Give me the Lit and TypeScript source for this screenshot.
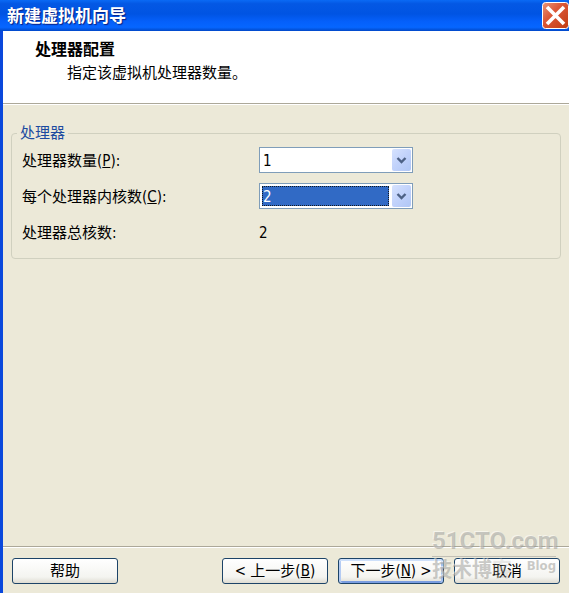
import { LitElement, html, css } from "lit";
import { customElement, property } from "lit/decorators.js";

@customElement("xp-select")
class XpSelect extends LitElement {
  @property() label = "";
  @property() key = "";
  @property() value = "1";
  @property({ type: Boolean, reflect: true }) active = false;

  static styles = css`
    :host {
      display: block;
    }
    .row {
      display: grid;
      grid-template-columns: 237px minmax(80px, 154px);
      align-items: center;
    }
    label {
      padding-top: 2px;
    }
    .box {
      position: relative;
      height: 26px;
      box-sizing: border-box;
      border: 1px solid #7f9db9;
      background: #fff;
      padding: 2px;
    }
    select {
      appearance: none;
      display: block;
      width: 100%;
      height: 20px;
      margin: 0;
      padding: 1px 24px 0 1px;
      border: 0;
      border-radius: 0;
      outline: none;
      background: none;
      color: #000;
      font: inherit;
      line-height: 20px;
    }
    .focus {
      display: none;
      position: absolute;
      inset: 2px 23px 2px 2px;
      border: 1px dotted #101820;
      pointer-events: none;
    }
    .active select {
      color: #fff;
      background: linear-gradient(#316ac5, #316ac5) no-repeat left / calc(100% - 21px) 100%;
    }
    .active .focus {
      display: block;
    }
    option {
      color: #000;
    }
    .arrow {
      position: absolute;
      top: 1px;
      right: 1px;
      bottom: 1px;
      width: 19px;
      border-radius: 2px;
      background: linear-gradient(135deg, #d6e2fe, #c1d2fb 50%, #b0c6f5);
      pointer-events: none;
    }
    svg {
      display: block;
      width: 100%;
      height: 100%;
    }
  `;

  render() {
    return html`
      <div class="row">
        <label for="field">${this.label}(<u>${this.key}</u>):</label>
        <div class="box ${this.active ? "active" : ""}">
          <select id="field" .value=${this.value}>
            ${["1", "2", "4", "8"].map(
              (n) => html`<option value=${n} ?selected=${n === this.value}>${n}</option>`
            )}
          </select>
          <span class="focus"></span>
          <span class="arrow">
            <svg viewBox="0 0 19 22" aria-hidden="true">
              <path d="M5.5 9 9.5 13 13.5 9" fill="none" stroke="#4d6185" stroke-width="2.4" />
            </svg>
          </span>
        </div>
      </div>
    `;
  }
}

@customElement("app-root")
class AppRoot extends LitElement {
  static styles = css`
    :host {
      display: flex;
      flex-direction: column;
      position: relative;
      min-height: 100vh;
      box-sizing: border-box;
      overflow: hidden;
      background: #ece9d8;
      color: #000;
      font-family: "DejaVu Sans Condensed", "Noto Sans CJK SC", sans-serif;
      font-size: 15px;
      line-height: 20px;
    }
    .title {
      display: flex;
      align-items: center;
      justify-content: space-between;
      height: 31px;
      padding-left: 7px;
      box-sizing: border-box;
      background: linear-gradient(#0a6af5, #0458e4 12%, #0054e3 45%, #0560fb 70%, #0666ff 88%, #0148c8);
    }
    .title h1 {
      margin: 0;
      color: #fff;
      font-size: 17px;
      line-height: 24px;
      text-shadow: 1px 1px 1px #0a1f80;
    }
    .close {
      display: block;
      width: 27px;
      height: 27px;
      margin: 0;
      padding: 0;
      border: 0;
      background: none;
    }
    .close svg {
      display: block;
    }
    .body {
      flex: 1;
      display: flex;
      flex-direction: column;
      border-left: 3px solid #0a48dc;
    }
    .head {
      height: 73px;
      box-sizing: border-box;
      padding: 8px 32px;
      background: #fff;
      border-bottom: 1px solid #aca899;
    }
    .head h2 {
      margin: 0;
      font-size: 16px;
      line-height: 22px;
    }
    .head p {
      margin: 0 0 0 32px;
      line-height: 24px;
    }
    .content {
      flex: 1;
      border-top: 1px solid #fff;
      padding: 18px 8px;
    }
    fieldset {
      margin: 0;
      min-width: 0;
      padding: 4px 10px 13px;
      border: 1px solid #d0d0bf;
      border-radius: 4px;
    }
    legend {
      margin-left: -5px;
      padding: 0 3px;
      color: #1c4ba0;
    }
    .rows {
      display: grid;
      gap: 10px;
    }
    .total {
      display: grid;
      grid-template-columns: 237px 1fr;
      align-items: center;
      height: 26px;
      padding-top: 2px;
      box-sizing: border-box;
    }
    .foot {
      display: flex;
      gap: 10px;
      padding: 11px 9px 9px;
      border-top: 1px solid #aca899;
      box-shadow: inset 0 1px #fff;
    }
    .foot button {
      width: 106px;
      height: 26px;
      padding: 0;
      border: 1px solid #1d4468;
      border-radius: 3px;
      background: linear-gradient(#fff, #f4f4f0 75%, #dfdcd2);
      color: #000;
      font: inherit;
      line-height: 24px;
      white-space: nowrap;
    }
    .foot .help {
      margin-right: auto;
    }
    .foot .next {
      box-shadow: inset 0 2px #cee0fa, inset 2px 0 #b4cbf3, inset -2px 0 #a5c0ee, inset 0 -2px #7a9de0;
    }
    .mark {
      position: absolute;
      right: 13px;
      bottom: 10px;
      width: 124px;
      color: rgba(150, 150, 145, 0.5);
      text-shadow: -1px -1px rgba(255, 255, 255, 0.5);
      font-weight: bold;
      white-space: nowrap;
      pointer-events: none;
    }
    .site {
      border-bottom: 1px solid rgba(150, 150, 145, 0.5);
      font-family: Roboto, "Liberation Sans", sans-serif;
      font-size: 24px;
      line-height: 29px;
    }
    .sub {
      display: flex;
      justify-content: space-between;
      font-size: 20px;
      line-height: 26px;
    }
    .faint {
      opacity: 0.4;
    }
    .blog {
      font-size: 13px;
      line-height: 18px;
    }
  `;

  render() {
    return html`
      <header class="title">
        <h1>新建虚拟机向导</h1>
        <button class="close" aria-label="关闭">
          <svg width="27" height="27" viewBox="0 0 27 27" aria-hidden="true">
            <defs>
              <linearGradient id="red" x1="0" y1="0" x2="1" y2="1">
                <stop offset="0" stop-color="#e9967a" />
                <stop offset="0.4" stop-color="#dc5838" />
                <stop offset="1" stop-color="#c03c12" />
              </linearGradient>
            </defs>
            <rect x="0.5" y="0.5" width="26" height="26" rx="3" fill="url(#red)" stroke="#fff" />
            <path d="M5 5 22 22M22 5 5 22" stroke="#fff" stroke-width="3.6" />
          </svg>
        </button>
      </header>
      <main class="body">
        <section class="head">
          <h2>处理器配置</h2>
          <p>指定该虚拟机处理器数量。</p>
        </section>
        <section class="content">
          <fieldset>
            <legend>处理器</legend>
            <div class="rows">
              <xp-select label="处理器数量" key="P" value="1"></xp-select>
              <xp-select label="每个处理器内核数" key="C" value="2" active></xp-select>
              <div class="total"><span>处理器总核数:</span><output>2</output></div>
            </div>
          </fieldset>
        </section>
        <footer class="foot">
          <button class="help">帮助</button>
          <button>&lt; 上一步(<u>B</u>)</button>
          <button class="next">下一步(<u>N</u>) &gt;</button>
          <button>取消</button>
        </footer>
      </main>
      <div class="mark">
        <div class="site">51CTO.com</div>
        <div class="sub"><span>技术博<span class="faint">客</span></span><span class="blog">Blog</span></div>
      </div>
    `;
  }
}
